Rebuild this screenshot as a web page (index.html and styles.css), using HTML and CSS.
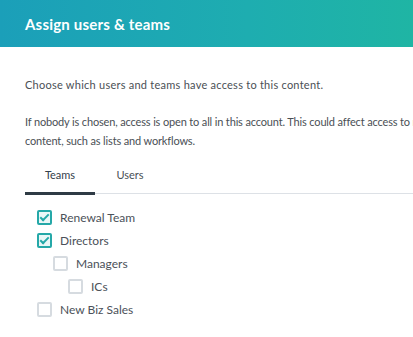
FILE: index.html
```html
<!DOCTYPE html>
<html lang="en">
<head>
<meta charset="UTF-8">
<meta name="viewport" content="width=device-width, initial-scale=1.0">
<title>Assign users &amp; teams</title>
<link rel="stylesheet" href="styles.css">
</head>
<body>
    <div class="header">
        <h1>Assign users &amp; teams</h1>
    </div>

    <div class="content">
        <p class="intro">Choose which users and teams have access to this content.</p>
        <p class="note">If nobody is chosen, access is open to all in this account. This could affect access to related<br>content, such as lists and workflows.</p>

        <ul class="tabs">
            <li class="tab active">Teams</li>
            <li class="tab">Users</li>
        </ul>

        <div class="tree">
            <label class="item"><span class="box checked"></span>Renewal Team</label>
            <label class="item"><span class="box checked"></span>Directors</label>
            <label class="item level-1"><span class="box"></span>Managers</label>
            <label class="item level-2"><span class="box"></span>ICs</label>
            <label class="item"><span class="box"></span>New Biz Sales</label>
        </div>
    </div>
</body>
</html>
```

FILE: styles.css
```css
body {
    font-family: Lato, "Open Sans", sans-serif;
    margin: 0;
    background-color: #fff;
    color: #4a4f55;
    overflow: hidden;
}
.header {
    height: 47px;
    background: linear-gradient(90deg, #1b9fb9 0%, #1eadb0 60%, #1fb5a4 100%);
    display: flex;
    align-items: center;
    padding-left: 25px;
}
h1 {
    margin: 0;
    font-size: 15px;
    font-weight: 700;
    color: #fff;
    letter-spacing: 0.2px;
}
.content {
    width: 600px;
    padding: 0 0 0 25px;
}
.intro {
    margin: 29px 0 0 0;
    font-size: 11px;
    line-height: 18px;
    letter-spacing: 0.25px;
}
.note {
    margin: 18px 0 0 0;
    font-size: 11px;
    line-height: 19px;
    letter-spacing: -0.15px;
    white-space: nowrap;
}
.tabs {
    list-style: none;
    margin: 18px 0 0 0;
    padding: 0;
    display: flex;
    border-bottom: 1px solid #dde1e6;
}
.tab {
    font-size: 11px;
    padding: 0 0 11px 0;
    text-align: center;
    width: 70px;
    margin-bottom: -2px;
    border-bottom: 3px solid transparent;
}
.tab.active {
    border-bottom-color: #2f3b45;
    color: #33404b;
}
.tree {
    padding: 12px 0 0 12px;
}
.item {
    display: flex;
    align-items: center;
    height: 23px;
    font-size: 12px;
    color: #4b5159;
}
.level-1 {
    padding-left: 16px;
}
.level-2 {
    padding-left: 31px;
}
.box {
    width: 11px;
    height: 11px;
    border: 2px solid #d6dbe0;
    border-radius: 2px;
    margin-right: 8px;
    position: relative;
    flex-shrink: 0;
}
.box.checked {
    border-color: #25a8a8;
    background-color: #eaf7f7;
}
.box.checked::after {
    content: "";
    position: absolute;
    left: 3px;
    top: 0px;
    width: 3px;
    height: 7px;
    border: solid #25a8a8;
    border-width: 0 2px 2px 0;
    transform: rotate(45deg);
}
```
